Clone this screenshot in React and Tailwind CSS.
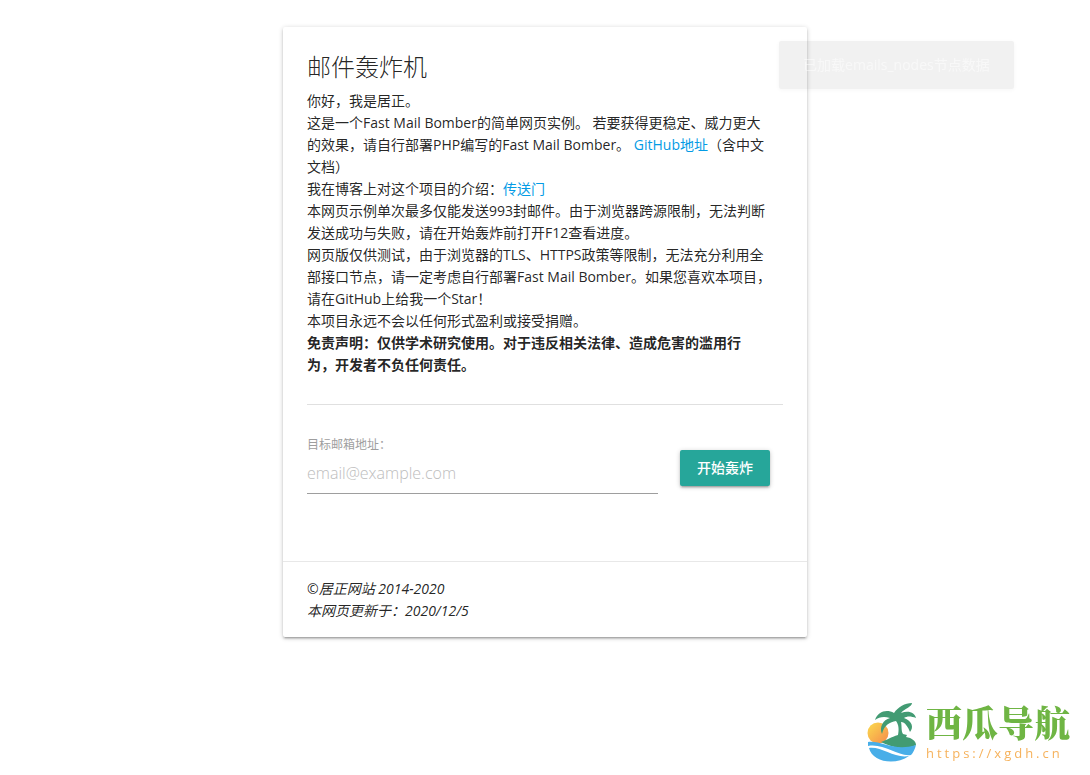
import { useState } from 'react'

const intro = [
  '本网页示例单次最多仅能发送993封邮件。由于浏览器跨源限制，无法判断',
  '发送成功与失败，请在开始轰炸前打开F12查看进度。',
  '网页版仅供测试，由于浏览器的TLS、HTTPS政策等限制，无法充分利用全',
  '部接口节点，请一定考虑自行部署Fast Mail Bomber。如果您喜欢本项目，',
  '请在GitHub上给我一个Star！',
  '本项目永远不会以任何形式盈利或接受捐赠。',
]

function Watermark() {
  return (
    <a href="#nav" className="fixed right-5 bottom-3 flex items-center gap-2">
      <svg width="52" height="60" viewBox="0 0 50 60" aria-hidden="true">
        <defs>
          <linearGradient id="sun" x1="0" y1="0" x2="1" y2="1">
            <stop offset="0" stopColor="#fbdc4e" />
            <stop offset="1" stopColor="#f58a4b" />
          </linearGradient>
        </defs>
        <circle cx="11" cy="30" r="10.5" fill="url(#sun)" />
        <path d="M14 39C20 37 24 34 31 32C32 27 32 22 29 18C23 19 17 22 15 31C12 24 16 17 23 15C17 13 12 14 8 17C11 8 20 6 27 10C31 4 38 0 45 0C45 4 38 5 34 10C42 7 48 10 49 15C44 13 40 13 37 15C45 18 47 24 43 29C41 24 38 19 34 19C35 23 34 28 36 31L40 32L39 34C45 35 49 38 49 42C38 48 24 44 14 39Z" fill="#429b73" />
        <path d="M1 39C14 37 27 49 49 42C48 46 46 50 44 52C31 54 17 40 1 43Z" fill="#48aee8" />
        <path d="M2 45C14 43 28 56 42 53C28 63 5 59 2 45Z" fill="#48aee8" />
      </svg>
      <span className="flex flex-col">
        <span className="font-['Liberation_Serif','Noto_Serif_CJK_SC','Noto_Sans_CJK_SC',serif] text-[36px] leading-10 font-black text-[#6fb544]">西瓜导航</span>
        <span className="font-['Open_Sans',sans-serif] text-[13px] leading-4 font-medium tracking-[3px] text-[#f6b25c]">https://xgdh.cn</span>
      </span>
    </a>
  )
}

export default function App() {
  const [email, setEmail] = useState('')

  return (
    <div className="min-h-screen bg-white pt-[27px] font-['Open_Sans','Noto_Sans_CJK_SC',sans-serif] text-[14px] leading-[22px] text-black/87">
      <main className="mx-auto w-full max-w-[524px] rounded-xs bg-white shadow-[0_2px_2px_rgba(0,0,0,0.14),0_3px_1px_-2px_rgba(0,0,0,0.12),0_1px_5px_rgba(0,0,0,0.2)]">
        <div className="p-6 pb-[67px]">
          <h1 className="mb-[7px] text-2xl font-light">邮件轰炸机</h1>
          <p>
            你好，我是居正。<br />
            这是一个Fast Mail Bomber的简单网页实例。 若要获得更稳定、威力更大<br />
            的效果，请自行部署PHP编写的Fast Mail Bomber。 <a href="#github" className="text-[#039be5]">GitHub地址</a>（含中文<br />
            文档）<br />
            我在博客上对这个项目的介绍：<a href="#blog" className="text-[#039be5]">传送门</a>
          </p>
          {intro.map((line) => <p key={line}>{line}</p>)}
          <p className="font-bold">
            免责声明：仅供学术研究使用。对于违反相关法律、造成危害的滥用行<br />
            为，开发者不负任何责任。
          </p>

          <hr className="mt-7 border-[#e0e0e0]" />

          <form className="mt-8 flex items-start gap-[22px]" onSubmit={(e) => e.preventDefault()}>
            <div className="min-w-0 flex-1">
              <label htmlFor="email" className="block text-[12px] leading-4 text-[#9e9e9e]">目标邮箱地址：</label>
              <input
                id="email"
                type="email"
                value={email}
                onChange={(e) => setEmail(e.target.value)}
                placeholder="email@example.com"
                className="h-[41px] w-full border-b border-[#9e9e9e] text-base font-light outline-none placeholder:text-[#bdbdbd]"
              />
            </div>
            <button type="submit" className="mt-[13px] mr-[13px] h-9 rounded-xs bg-[#26a69a] px-[17px] font-medium text-white shadow-[0_2px_2px_rgba(0,0,0,0.14),0_3px_1px_-2px_rgba(0,0,0,0.12),0_1px_5px_rgba(0,0,0,0.2)]">
              开始轰炸
            </button>
          </form>
        </div>
        <footer className="border-t border-[#e8e8e8] px-6 pt-4 pb-[15px] italic">
          ©居正网站 2014-2020<br />
          本网页更新于：2020/12/5
        </footer>
      </main>

      <div role="status" className="fixed top-[41px] right-[7%] flex h-12 items-center rounded-xs bg-[#323232]/7 px-6 shadow-[0_1px_4px_rgba(0,0,0,0.04)]">
        <span className="text-[14px] text-white/50">已加载emails_nodes节点数据</span>
      </div>

      <Watermark />
    </div>
  )
}
